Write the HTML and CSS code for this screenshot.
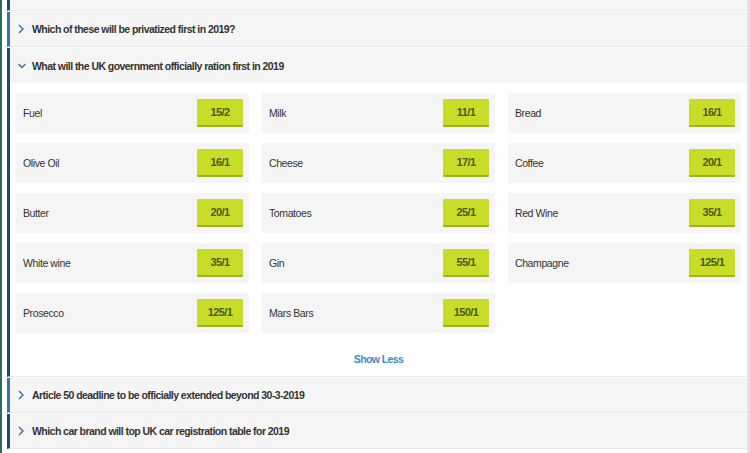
FILE: index.html
```html
<!DOCTYPE html>
<html lang="en">
<head>
    <meta charset="UTF-8" />
    <meta name="viewport" content="width=device-width, initial-scale=1.0" />
    <title>Specials</title>
    <link rel="stylesheet" href="styles.css">
</head>
<body>

<div class="page">
    <div class="markets">

        <div class="market market-dark">
            <div class="market-head market-head-cut"></div>
        </div>

        <div class="market market-light">
            <div class="market-head">
                <svg class="chev" width="8" height="10" viewBox="0 0 8 10"><polyline points="1,1 5,5 1,9" /></svg>
                <span>Which of these will be privatized first in 2019?</span>
            </div>
        </div>

        <div class="market market-dark open">
            <div class="market-head">
                <svg class="chev" width="8" height="10" viewBox="0 0 8 10"><polyline points="0.5,3 4,6.5 7.5,3" /></svg>
                <span>What will the UK government officially ration first in 2019</span>
            </div>
            <div class="market-body">
                <div class="selections">
                    <div class="sel"><span>Fuel</span><button class="odds">15/2</button></div>
                    <div class="sel"><span>Milk</span><button class="odds">11/1</button></div>
                    <div class="sel"><span>Bread</span><button class="odds">16/1</button></div>
                    <div class="sel"><span>Olive Oil</span><button class="odds">16/1</button></div>
                    <div class="sel"><span>Cheese</span><button class="odds">17/1</button></div>
                    <div class="sel"><span>Coffee</span><button class="odds">20/1</button></div>
                    <div class="sel"><span>Butter</span><button class="odds">20/1</button></div>
                    <div class="sel"><span>Tomatoes</span><button class="odds">25/1</button></div>
                    <div class="sel"><span>Red Wine</span><button class="odds">35/1</button></div>
                    <div class="sel"><span>White wine</span><button class="odds">35/1</button></div>
                    <div class="sel"><span>Gin</span><button class="odds">55/1</button></div>
                    <div class="sel"><span>Champagne</span><button class="odds">125/1</button></div>
                    <div class="sel"><span>Prosecco</span><button class="odds">125/1</button></div>
                    <div class="sel"><span>Mars Bars</span><button class="odds">150/1</button></div>
                </div>
                <a class="show-less" href="#">Show Less</a>
            </div>
        </div>

        <div class="market market-light">
            <div class="market-head">
                <svg class="chev" width="8" height="10" viewBox="0 0 8 10"><polyline points="1,1 5,5 1,9" /></svg>
                <span>Article 50 deadline to be officially extended beyond 30-3-2019</span>
            </div>
        </div>

        <div class="market market-dark">
            <div class="market-head">
                <svg class="chev" width="8" height="10" viewBox="0 0 8 10"><polyline points="1,1 5,5 1,9" /></svg>
                <span>Which car brand will top UK car registration table for 2019</span>
            </div>
        </div>

    </div>
</div>

</body>
</html>
```

FILE: styles.css
```css
/* General */
body {
    margin: 0;
    font-family: 'Liberation Sans', Arial, sans-serif;
    font-size: 11px;
    color: #333;
    background: #ffffff;
    overflow: hidden;
}

.page {
    height: 453px;
    border-left: 2px solid #2e6b5c;
    border-right: 3px solid #e4e4e4;
    padding-left: 5px;
    box-sizing: border-box;
}

/* Market rows */
.market {
    border-left: 3px solid #1f4d6e;
    border-bottom: 1px solid #e9e9e9;
    margin-bottom: 1px;
}

.market-light {
    border-left-color: #3273ae;
}

.market-head {
    display: flex;
    align-items: center;
    height: 34px;
    padding-left: 8px;
    background: #f5f5f5;
    font-size: 10.5px;
    font-weight: bold;
    letter-spacing: -0.55px;
    color: #333;
}

.market-head-cut {
    height: 10px;
}

.chev {
    flex: none;
    margin-right: 6px;
}

.chev polyline {
    fill: none;
    stroke: #2f6fa8;
    stroke-width: 1.4;
}

/* Open market body */
.market.open .market-head {
    height: 35px;
}

.market-body {
    background: #ffffff;
    padding: 10px 6px 0 6px;
}

.selections {
    display: grid;
    grid-template-columns: repeat(3, 1fr);
    column-gap: 13px;
    row-gap: 10px;
}

.sel {
    display: flex;
    align-items: center;
    justify-content: space-between;
    height: 40px;
    padding: 0 6px 0 7px;
    background: #f5f5f5;
    font-size: 10.5px;
    letter-spacing: -0.4px;
    color: #333;
}

.odds {
    width: 46px;
    height: 28px;
    border: none;
    border-bottom: 2px solid #9fb21a;
    border-radius: 1px;
    background: #c9dc28;
    color: #4d5a14;
    font-family: 'Liberation Sans', Arial, sans-serif;
    font-size: 11px;
    font-weight: bold;
    letter-spacing: -0.6px;
    padding: 0;
    cursor: pointer;
}

.show-less {
    display: block;
    text-align: center;
    padding: 20px 0 10px 0;
    line-height: 13px;
    font-size: 10.5px;
    letter-spacing: -0.6px;
    color: #3a8ccc;
    font-weight: bold;
    text-decoration: none;
}
```
